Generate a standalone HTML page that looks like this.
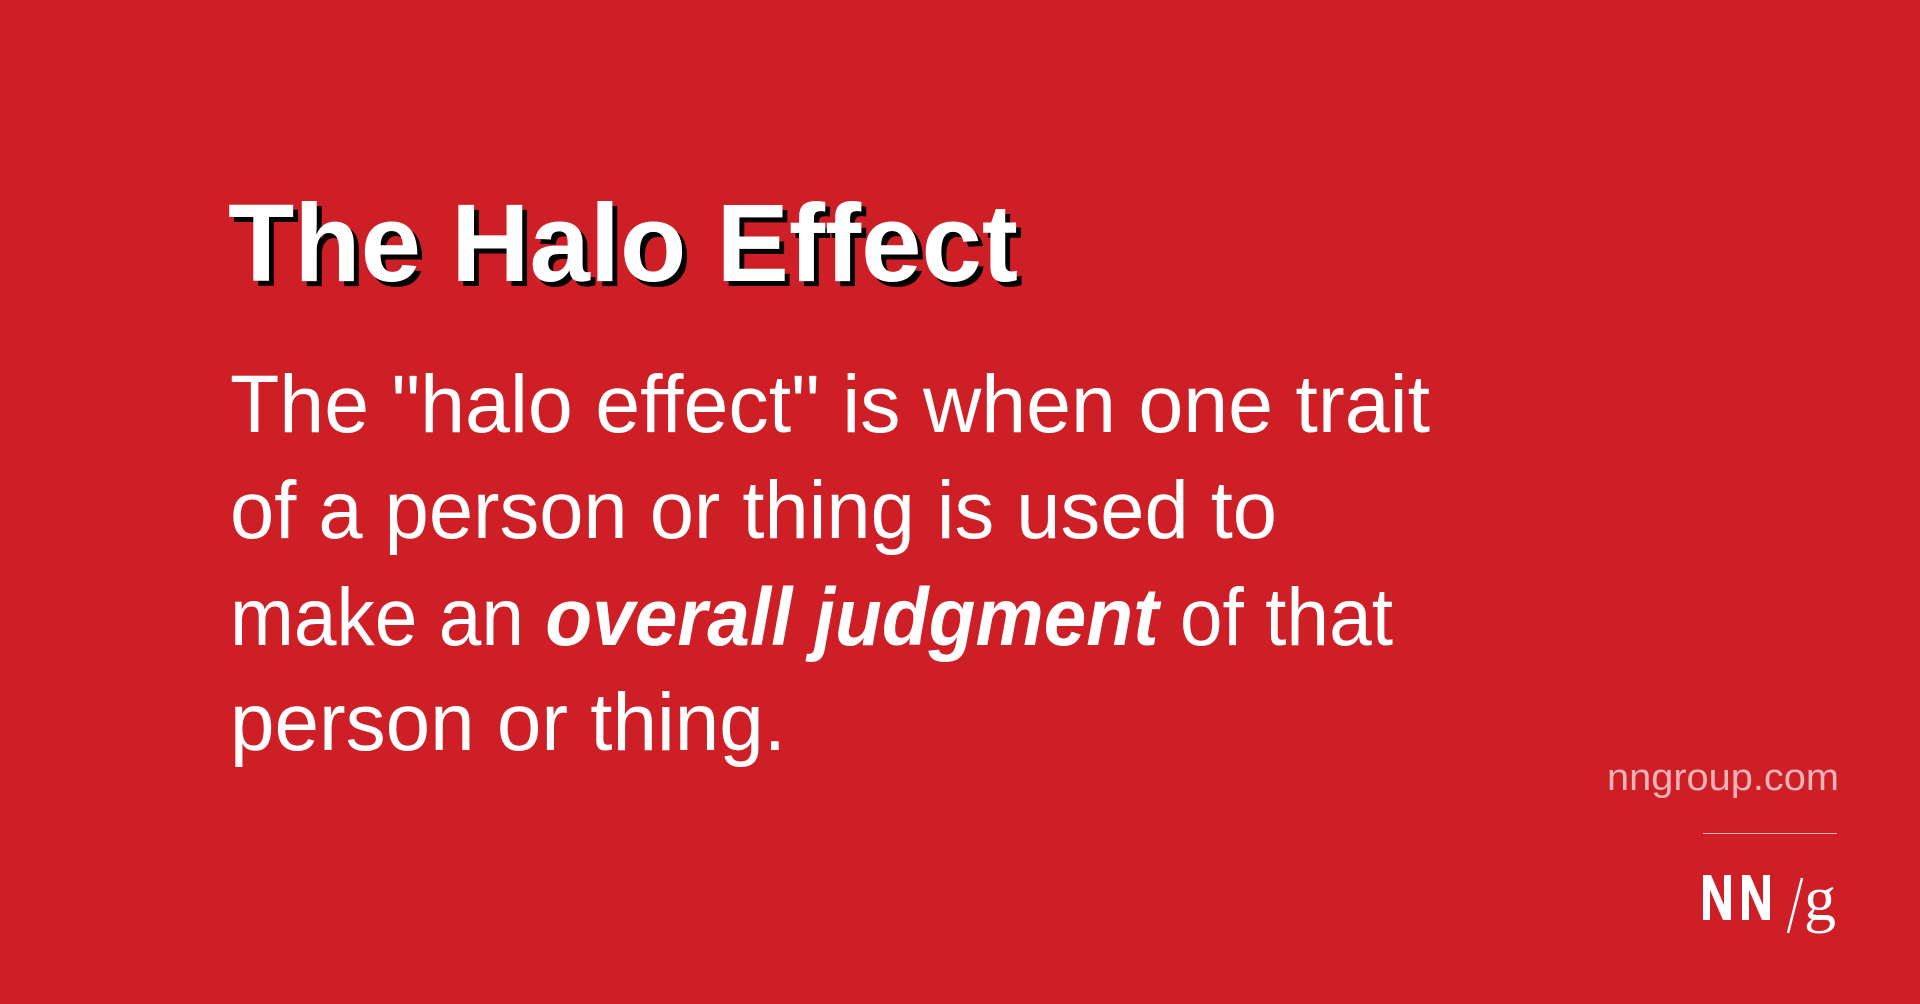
<!DOCTYPE html>
<html><head><meta charset="utf-8"><style>
html,body{margin:0;padding:0}
body{width:1920px;height:1004px;background:#ce1f27;position:relative;overflow:hidden;font-family:"Liberation Sans",sans-serif;color:#fff}
.l{position:absolute;white-space:nowrap;transform-origin:0 0;line-height:1}
#t{font-weight:bold;font-size:110px;text-shadow:5px 5px 0 #000}
.b{font-size:82px}
#u{font-size:38px;color:#f1b3b6}
</style></head><body>
<div class="l" id="t">The Halo Effect</div>
<div class="l b" id="b1">The "halo effect" is when one trait</div>
<div class="l b" id="b2">of a person or thing is used to</div>
<div class="l b" id="b3">make an <b><i>overall judgment</i></b> of that</div>
<div class="l b" id="b4">person or thing.</div>
<div class="l" id="u">nngroup.com</div>
<div style="position:absolute;left:1703px;top:833px;width:134px;height:1px;background:#f1b3b6"></div>
<svg style="position:absolute;left:1700px;top:870px" width="145" height="68" viewBox="0 0 145 68">
<path d="M3 5h8l13 30V5h7v45h-8L10 20v30H3z" fill="#fff"/>
<path d="M42 5h8l13 30V5h7v45h-8L49 20v30h-7z" fill="#fff"/>
<line x1="102" y1="8" x2="88" y2="63" stroke="#fff" stroke-width="2.5"/>
<text x="104" y="50" font-family="Liberation Serif,serif" font-size="64" fill="#fff">g</text>
</svg>
<script>
var spec=[["t",228,289,790],["b1",230,438,1200],["b2",230,544,1047],["b3",230,651,1163],["b4",230,756,556],["u",1607,793,232]];
spec.forEach(function(s){
 var e=document.getElementById(s[0]);
 var fs=parseFloat(getComputedStyle(e).fontSize);
 var w=e.getBoundingClientRect().width;
 var k=s[3]/w;
 e.style.left=s[1]+"px";
 e.style.top=(s[2]-fs*0.905)+"px";
 e.style.transform="scaleX("+k+")";
});
</script>
</body></html>
